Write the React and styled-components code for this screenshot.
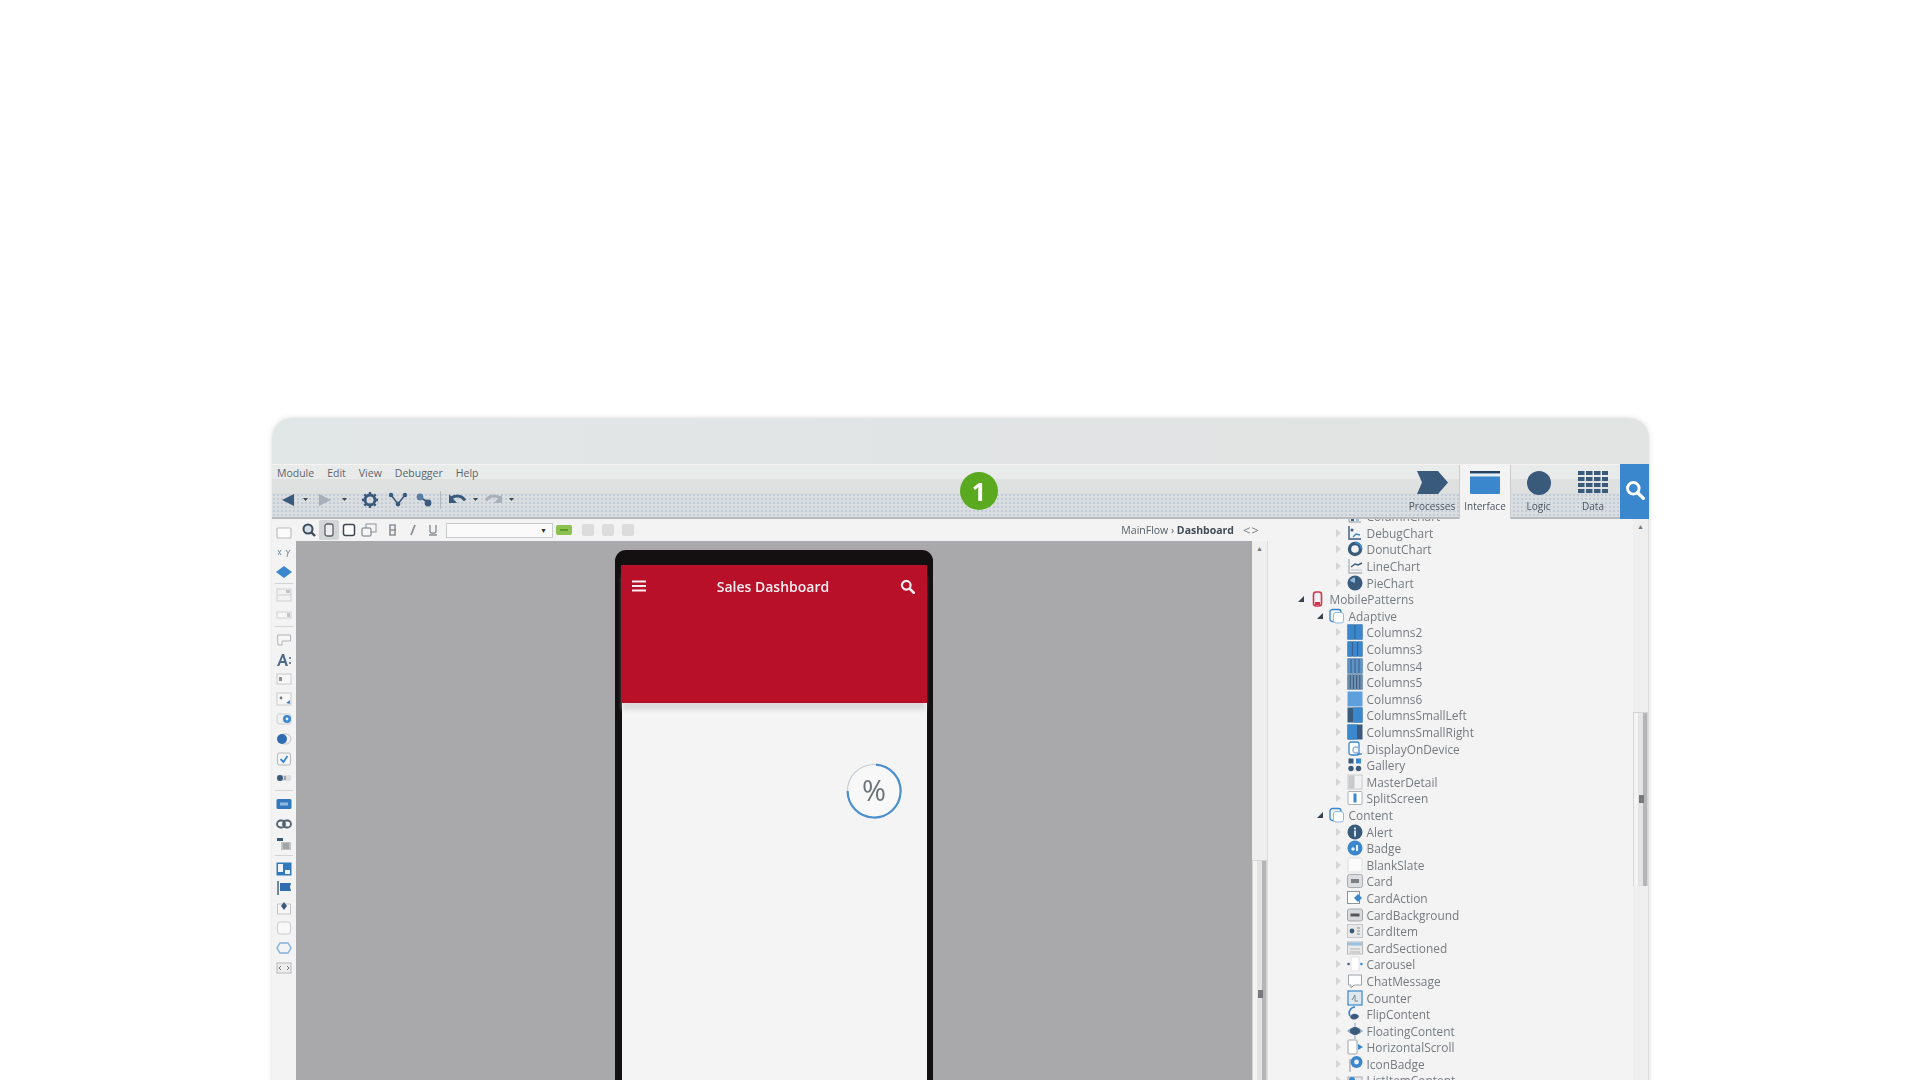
import styled, { createGlobalStyle } from "styled-components"

const Global = createGlobalStyle`
  html, body { margin: 0; background: #fff; }
  body { font-family: "Open Sans", "Liberation Sans", sans-serif; }
`
const NAVY = "#3a5a7c"
const BLUE = "#3b87cd"

const Page = styled.div`
  width: 1920px;
  height: 1080px;
  overflow: hidden;
  padding: 418px 0 0 272px;
  box-sizing: border-box;
`
const Window = styled.div`
  position: relative;
  width: 1377px;
  height: 680px;
  display: flex;
  flex-direction: column;
  border-radius: 20px 20px 0 0;
  overflow: hidden;
  background: #f4f3f3;
  box-shadow: 0 0 5px rgba(120, 110, 100, 0.25);
  filter: blur(0.7px);
`
const TitleBar = styled.div`
  height: 46px;
  flex: none;
  background: linear-gradient(90deg, #e1e6e6, #e2e3e3);
`
const Ribbon = styled.div`
  height: 55px;
  flex: none;
  display: flex;
  box-sizing: border-box;
  border-top: 1px solid #f8f3f3;
  background-color: #dbdee1;
  background-image:
    linear-gradient(#e9ebeb 0, #e9ebeb 14px, #dfe1e1 14px, #dfe1e1 28px, transparent 28px),
    radial-gradient(#c2ccd7 1.1px, transparent 1.4px);
  background-size: 100% 100%, 4px 4px;
`
const RibbonLeft = styled.div`
  flex: 1;
  display: flex;
  flex-direction: column;
  border-bottom: 2px solid #b9bcbe;
`
const Menu = styled.div`
  display: flex;
  gap: 13px;
  height: 16px;
  padding-left: 5px;
  align-items: center;
  font-size: 10.5px;
  color: #5d646a;
`
const Tools = styled.div`
  display: flex;
  align-items: center;
  height: 37px;
  padding: 2px 0 0 8.5px;
  box-sizing: border-box;
`
const ToolSlot = styled.span`
  display: flex;
  justify-content: center;
  width: ${(p) => p.$w}px;
`
const ToolSep = styled.span`
  width: 1px;
  height: 18px;
  margin: 0 7px 0 4px;
  background: #b5b9bd;
`
const Tab = styled.div`
  width: ${(p) => p.$w}px;
  display: flex;
  flex-direction: column;
  align-items: center;
  justify-content: space-between;
  padding: 6px 0 ${(p) => (p.$active ? 6 : 4)}px;
  box-sizing: border-box;
  font-size: 10px;
  color: #4a5560;
  background: ${(p) => (p.$active ? "#f4f3f3" : "transparent")};
  border-bottom: ${(p) => (p.$active ? "none" : "2px solid #b9bcbe")};
  border-left: ${(p) => (p.$active ? "1px solid #c9cbcc" : "none")};
  border-right: ${(p) => (p.$active ? "1px solid #c9cbcc" : "none")};
`
const SearchTab = styled.div`
  width: 29px;
  margin-top: -1px;
  padding-bottom: 3px;
  box-sizing: border-box;
  display: flex;
  align-items: center;
  justify-content: center;
  background: ${BLUE};
`
const Main = styled.div`
  flex: 1;
  display: flex;
  min-height: 0;
`
const Palette = styled.div`
  width: 24px;
  flex: none;
  display: flex;
  flex-direction: column;
  align-items: center;
  padding-top: 4px;
  box-sizing: border-box;
`
const PaletteItem = styled.span`
  height: 19.8px;
  display: flex;
  align-items: center;
  justify-content: center;
`
const PaletteSep = styled.span`
  width: 18px;
  height: 1px;
  margin: ${(p) => p.$m};
  background: #d3d4d5;
`
const Center = styled.div`
  width: 972px;
  flex: none;
  display: flex;
  flex-direction: column;
`
const SubBar = styled.div`
  height: 22px;
  flex: none;
  display: flex;
  align-items: center;
  padding-left: 3px;
  font-size: 10px;
  color: #55606a;
`
const SubBtn = styled.span`
  width: 20px;
  height: 20px;
  margin-left: ${(p) => p.$ml || 0}px;
  display: flex;
  align-items: center;
  justify-content: center;
  background: ${(p) => (p.$on ? "#d4d5d6" : "transparent")};
  border-radius: 2px;
`
const SubSpacer = styled.span`
  width: 4px;
  height: 18px;
  flex: none;
`
const Combo = styled.span`
  width: 100px;
  height: 13px;
  margin: 0 1px 0 3px;
  padding-right: 5px;
  display: flex;
  align-items: center;
  justify-content: flex-end;
  background: #fafafa;
  border: 1px solid #c9cacb;
  font-size: 7px;
  color: #333;
`
const Crumbs = styled.span`
  margin-left: auto;
  margin-right: 9px;
  font-size: 10.5px;
  white-space: nowrap;
  b { color: #3f4c58; font-weight: 700; }
`
const Chevrons = styled.span`
  width: 25px;
  color: #7c8186;
  font-size: 13px;
  letter-spacing: 1px;
`
const CanvasRow = styled.div`
  flex: 1;
  display: flex;
  min-height: 0;
`
const Canvas = styled.div`
  width: 956px;
  padding: 9px 0 0 319px;
  box-sizing: border-box;
  background: #a9a8ab;
  overflow: hidden;
`
const Phone = styled.div`
  width: 318px;
  height: 700px;
  box-sizing: border-box;
  padding: 15px 6px 0 7px;
  background: #141012;
  border-radius: 11px 11px 0 0;
`
const Screen = styled.div`
  height: 100%;
  background: #f5f4f4;
`
const PhoneHeader = styled.div`
  height: 138px;
  box-sizing: border-box;
  padding: 11px 12px 0 11px;
  margin-left: -1px;
  background: #b81029;
  box-shadow: 0 9px 4px -2px #dcdcdc;
`
const HeaderBar = styled.div`
  height: 20px;
  display: flex;
  justify-content: space-between;
  align-items: center;
  color: #fbeef0;
  font-size: 14px;
  font-weight: 600;
`
const PercentRow = styled.div`
  display: flex;
  justify-content: flex-end;
  padding: 60px 25px 0 0;
`
const VScroll = styled.div`
  width: 16px;
  flex: none;
  display: flex;
  flex-direction: column;
  background: #f0efef;
  border-right: 1px solid #dcdcdc;
  box-sizing: border-box;
`
const ScrollArrow = styled.span`
  height: 16px;
  flex: none;
  text-align: center;
  font-size: 7px;
  line-height: 16px;
  color: #777;
`
const ScrollGap = styled.span`
  height: ${(p) => p.$h}px;
  flex: none;
`
const Thumb = styled.span`
  position: relative;
  flex: ${(p) => (p.$h ? "none" : 1)};
  height: ${(p) => p.$h || 0}px;
  background: linear-gradient(90deg, #f4f4f4 0 30%, #e4e4e5 30% 70%, #b4b5b8 70%);
  border: 1px solid #d5d5d6;
  border-bottom: none;
  &::after {
    content: "";
    position: absolute;
    left: 5px;
    top: ${(p) => p.$grip}px;
    width: 5px;
    height: 8px;
    background: #77797c;
  }
`
const TreePanel = styled.div`
  flex: 1;
  overflow: hidden;
`
const TreeList = styled.div`
  margin-top: -11px;
`
const Row = styled.div`
  height: 16.6px;
  display: flex;
  align-items: center;
  padding-left: ${(p) => 29.5 + p.$level * 19}px;
  font-size: 11.9px;
  color: #767b80;
  white-space: nowrap;
`
const Arrow = styled.span`
  width: 0;
  height: 0;
  flex: none;
  margin-right: 6px;
  ${(p) =>
    p.$open
      ? `border-style: solid; border-width: 0 0 6px 6px; border-color: transparent transparent #36424e transparent;`
      : `border-style: solid; border-width: 4px 0 4px 5px; border-color: transparent transparent transparent #d3d5d7;`}
`
const RowIcon = styled.span`
  width: 16px;
  height: 16px;
  flex: none;
  margin-right: 4px;
  display: flex;
`
const Badge = styled.div`
  position: absolute;
  left: 688px;
  top: 54px;
  width: 38px;
  height: 38px;
  border-radius: 50%;
  background: #5aa91f;
  color: #fff;
  font-size: 25px;
  font-weight: 700;
  line-height: 38px;
  text-align: center;
`

const Svg = ({ w = 16, h = 16, vb = "0 0 16 16", children }) => (
  <svg width={w} height={h} viewBox={vb} style={{ display: "block" }}>
    {children}
  </svg>
)

const Dot = () => (
  <Svg w={5} h={5} vb="0 0 5 5"><path d="M0 1h5L2.5 4z" fill="#3c4650" /></Svg>
)

const columns = (n, fill) => {
  const bars = []
  const gap = 1
  const w = (15 - gap * (n - 1)) / n
  for (let i = 0; i < n; i++) {
    bars.push(<rect key={i} x={0.5 + i * (w + gap)} y="0.5" width={w} height="15" fill={fill} />)
  }
  return <><rect x="0.5" y="0.5" width="15" height="15" fill={NAVY} />{bars}</>
}

const treeIcons = {
  chart: <><path d="M2 1v13h12" fill="none" stroke="#8b98a5" /><rect x="4" y="9" width="3" height="4" fill={NAVY} /><rect x="9" y="6" width="3" height="7" fill="#9cc0e2" /></>,
  debug: <><path d="M2 1v13h12" fill="none" stroke={NAVY} strokeWidth="1.4" /><circle cx="5" cy="5" r="1.5" fill={NAVY} /><path d="M6 12l3-3 4 1" stroke={BLUE} fill="none" strokeWidth="1.4" /></>,
  donut: <><circle cx="8" cy="8" r="5.5" fill="none" stroke={NAVY} strokeWidth="3.4" /><path d="M8 1.5a6.5 6.5 0 0 1 6.5 6.5" fill="none" stroke={BLUE} strokeWidth="2" /></>,
  line: <><path d="M2 1v14h13" fill="none" stroke="#aeb3b8" strokeWidth="1.4" /><path d="M4 9l4-3 3 1 4-2" fill="none" stroke={NAVY} strokeWidth="1.4" /><path d="M4 12h11" stroke="#bcc6d0" /></>,
  pie: <><circle cx="8" cy="8" r="7.5" fill={NAVY} /><path d="M8 8V2.5A5.5 5.5 0 0 0 3 6z" fill="#8fb7df" /></>,
  mobile: <><rect x="3.5" y="1" width="8" height="14" rx="2.5" fill="none" stroke="#d0344f" strokeWidth="1.6" /><rect x="5" y="11" width="5" height="3" fill="#d0344f" /></>,
  folder: <><rect x="1" y="1.5" width="11" height="12" rx="2.5" fill="none" stroke={BLUE} strokeWidth="1.3" /><rect x="4.5" y="4.5" width="10" height="10.5" rx="2.5" fill="#fff" stroke="#8fb7df" /></>,
  col2: columns(2, BLUE),
  col3: columns(3, BLUE),
  col4: columns(4, "#5c93c8"),
  col5: columns(5, "#6d8fb0"),
  col6: <rect x="0.5" y="0.5" width="15" height="15" fill="#5f9fdb" />,
  small: <><rect x="0.5" y="0.5" width="15" height="15" fill={NAVY} /><rect x="6" y="0.5" width="9.5" height="15" fill={BLUE} /></>,
  smallR: <><rect x="0.5" y="0.5" width="15" height="15" fill={NAVY} /><rect x="0.5" y="0.5" width="9.5" height="15" fill={BLUE} /></>,
  display: <><rect x="2" y="1" width="10" height="13" rx="2" fill="#fff" stroke={BLUE} strokeWidth="1.3" /><circle cx="9" cy="9" r="3" fill="none" stroke="#8fb7df" strokeWidth="1.4" /><path d="M10 13h5" stroke={BLUE} strokeWidth="1.4" /></>,
  gallery: <><rect x="1.5" y="1.5" width="5" height="5" fill={NAVY} /><rect x="9" y="1.5" width="5" height="5" fill={BLUE} /><circle cx="4" cy="11.5" r="2.7" fill={NAVY} /><circle cx="11.5" cy="11.5" r="2.7" fill={NAVY} /></>,
  master: <><rect x="1" y="1" width="14" height="14" fill="#f2f2f2" stroke="#c8cacc" /><rect x="1.5" y="1.5" width="6" height="13" fill="#c8cacc" /></>,
  split: <><rect x="1" y="1.5" width="14" height="13" rx="1" fill="#fff" stroke="#a9b0b6" /><rect x="6.5" y="3.5" width="3" height="9" fill={BLUE} /></>,
  alert: <><circle cx="8" cy="8" r="7.5" fill={NAVY} /><rect x="7" y="3.5" width="2" height="2" fill="#cfe0f0" /><rect x="7" y="6.5" width="2" height="6" fill="#cfe0f0" /></>,
  badge: <><circle cx="8" cy="8" r="7.5" fill={BLUE} /><circle cx="6" cy="9" r="1.7" fill="#e9f2fa" /><rect x="9" y="5" width="2" height="6" fill="#e9f2fa" /></>,
  blank: <rect x="1" y="1" width="14" height="14" rx="1" fill="#fbfbfb" stroke="#dedfe0" />,
  card: <><rect x="0.5" y="1.5" width="15" height="13" rx="2" fill="#dcdde0" stroke="#a8abaf" /><rect x="4" y="6" width="8" height="4" fill="#7b8087" /></>,
  cardAction: <><rect x="0.5" y="1.5" width="12" height="12" fill="#fff" stroke="#8d959c" /><path d="M11 4l4 4-4 4-4-4z" fill={BLUE} /></>,
  cardBg: <><rect x="0.5" y="2" width="15" height="12" rx="2" fill="#d9dadc" stroke="#a2a5a9" /><rect x="3.5" y="6.5" width="9" height="3" fill="#55595e" /></>,
  cardItem: <><rect x="0.5" y="1.5" width="15" height="13" fill="#e8e8e9" stroke="#c5c7c9" /><circle cx="5" cy="8" r="2.4" fill={NAVY} /><path d="M10 5h3M10 8h3M10 11h3" stroke="#8a8f94" /></>,
  cardSec: <><rect x="0.5" y="2" width="15" height="12" fill="#e9e9ea" stroke="#b9bcbf" /><rect x="1" y="2.5" width="14" height="3" fill="#9dbfe0" /><path d="M3 9h10M3 12h10" stroke="#b0b3b6" /></>,
  carousel: <><rect x="4" y="1" width="8" height="14" fill="#fff" stroke="#e3e3e4" /><circle cx="1.6" cy="8" r="1.3" fill={NAVY} /><circle cx="14.4" cy="8" r="1.3" fill={BLUE} /></>,
  chat: <path d="M1.5 2h13v10H7l-3 3v-3H1.5z" fill="#fdfdfd" stroke="#9ea3a8" />,
  counter: <><rect x="1" y="1" width="14" height="14" fill="#dfe7ef" stroke={BLUE} strokeWidth="1.2" /><path d="M5 10l3-5v6h3" fill="none" stroke="#80868c" /></>,
  flip: <><path d="M8 1a6 6 0 0 0-5 9" fill="none" stroke={BLUE} strokeWidth="1.6" /><path d="M3 11c2-4 6-4 9-1-1 4-7 5-9 1z" fill={NAVY} /></>,
  floating: <><path d="M0 8l4-3v6zM16 8l-4-3v6z" fill="#8aa7c4" /><ellipse cx="8" cy="8" rx="5" ry="4" fill={NAVY} /><path d="M8 0v4M8 12v4" stroke="#a9bfd5" strokeWidth="1.5" /></>,
  scroll: <><rect x="1" y="1" width="9" height="14" rx="1" fill="#fff" stroke="#9ea3a8" /><path d="M11 5l5 3-5 3z" fill={BLUE} /></>,
  iconBadge: <><path d="M3 3v13" stroke="#a9adb1" strokeWidth="1.4" /><circle cx="9.5" cy="6" r="6" fill={BLUE} /><circle cx="9.5" cy="6" r="2.4" fill="#e9f2fa" /></>,
  list: <><rect x="1" y="5" width="14" height="11" fill="#e6e7e8" stroke="#a9adb1" /><circle cx="5" cy="8" r="3" fill={BLUE} /></>,
}

const tree = [
  [2, "ColumnChart", "chart"], [2, "DebugChart", "debug"], [2, "DonutChart", "donut"],
  [2, "LineChart", "line"], [2, "PieChart", "pie"],
  [0, "MobilePatterns", "mobile", true], [1, "Adaptive", "folder", true],
  [2, "Columns2", "col2"], [2, "Columns3", "col3"], [2, "Columns4", "col4"], [2, "Columns5", "col5"],
  [2, "Columns6", "col6"], [2, "ColumnsSmallLeft", "small"], [2, "ColumnsSmallRight", "smallR"],
  [2, "DisplayOnDevice", "display"], [2, "Gallery", "gallery"], [2, "MasterDetail", "master"],
  [2, "SplitScreen", "split"], [1, "Content", "folder", true],
  [2, "Alert", "alert"], [2, "Badge", "badge"], [2, "BlankSlate", "blank"], [2, "Card", "card"],
  [2, "CardAction", "cardAction"], [2, "CardBackground", "cardBg"], [2, "CardItem", "cardItem"],
  [2, "CardSectioned", "cardSec"], [2, "Carousel", "carousel"], [2, "ChatMessage", "chat"],
  [2, "Counter", "counter"], [2, "FlipContent", "flip"], [2, "FloatingContent", "floating"],
  [2, "HorizontalScroll", "scroll"], [2, "IconBadge", "iconBadge"], [2, "ListItemContent", "list"],
]

const box = (extra) => <Svg w={16} h={14} vb="0 0 16 14">{extra}</Svg>
const outline = <rect x="1" y="2" width="14" height="10" rx="1" fill="#fbfbfb" stroke="#b9bcbf" strokeWidth="1.2" />

// separators hold their own vertical margin, the list in the picture is not evenly spaced
const palette = [
  box(outline),
  <Svg w={16} h={10} vb="0 0 16 10"><path d="M2 2l3 5M5 2L2 7M10 2l2 3 2-3M12 5l-1 4" stroke="#7c8e9f" fill="none" /></Svg>,
  <Svg w={16} h={14} vb="0 0 16 14"><path d="M8 1l8 6-8 6-8-6z" fill={BLUE} /></Svg>,
  "1px 0 1px",
  box(<><rect x="1" y="1" width="14" height="12" fill="#f2f2f2" stroke="#cdcfd1" /><path d="M1 7h14" stroke="#cdcfd1" /><rect x="10" y="2" width="4" height="3" fill="#c0c3c6" /></>),
  box(<><rect x="1" y="4" width="14" height="6" fill="#f7f7f7" stroke="#cdcfd1" /><rect x="11" y="5" width="3" height="4" fill="#c0c3c6" /></>),
  "1px 0 3px",
  box(<path d="M1.5 2h13v6H6v4H2z" fill="#f7f7f7" stroke="#b0b3b6" />),
  <Svg vb="0 0 16 16"><path d="M1 14L6 2h2l4 12h-2.4l-1-3H4.5l-1.2 3zM5.2 9h2.8L6.8 5z" fill="#4e6d8d" /><path d="M14 5v2M14 10v2" stroke="#4e6d8d" strokeWidth="1.6" /></Svg>,
  box(<><rect x="1" y="2" width="14" height="10" fill="#f7f7f7" stroke="#c8cacc" /><rect x="3" y="5" width="3" height="4" fill="#8b8f94" /></>),
  box(<><rect x="1" y="1" width="14" height="12" fill="#f7f7f7" stroke="#c8cacc" /><circle cx="5" cy="6" r="1.4" fill="#70757a" /><path d="M10 11l4-3v4z" fill={BLUE} /></>),
  box(<><rect x="1" y="2" width="14" height="10" rx="2" fill="#f0f0f0" stroke="#cdcfd1" /><circle cx="11" cy="7" r="4" fill={BLUE} /><circle cx="11" cy="7" r="1.4" fill="#e8f1fa" /></>),
  box(<><rect x="3" y="2" width="12" height="10" rx="5" fill="#f3f3f3" stroke="#bfc2c5" /><circle cx="6" cy="7" r="5" fill="#2f6db0" /></>),
  box(<><rect x="1.5" y="1" width="13" height="12" rx="2" fill="#f6f6f6" stroke="#b5b8bb" /><path d="M4.5 7l3 3 4-6" fill="none" stroke={BLUE} strokeWidth="1.8" /></>),
  box(<><rect x="1" y="4" width="14" height="6" fill="#dcdddf" /><circle cx="4" cy="7" r="3" fill={NAVY} /><rect x="8" y="5" width="2" height="4" fill="#9ea3a8" /></>),
  "2px 0 3px",
  box(<><rect x="0.5" y="2" width="15" height="10" rx="1.5" fill="#3278bd" /><rect x="4" y="5.5" width="8" height="3" fill="#8fb8df" /></>),
  <Svg w={16} h={12} vb="0 0 16 12"><rect x="1" y="2.5" width="8" height="7" rx="3.5" fill="none" stroke="#4e5f70" strokeWidth="1.8" /><rect x="7" y="2.5" width="8" height="7" rx="3.5" fill="none" stroke="#4e5f70" strokeWidth="1.8" /></Svg>,
  box(<><rect x="1" y="1" width="6" height="3" fill={NAVY} /><rect x="5" y="5" width="10" height="8" fill="#bfc2c5" /><path d="M7 7h6M7 9h6M7 11h6" stroke="#808589" /></>),
  "1px 0 3px",
  box(<><rect x="0.5" y="0.5" width="15" height="13" fill="#3278bd" /><rect x="2" y="2" width="5" height="8" fill="#eef4fa" /><rect x="9" y="8" width="5" height="4" fill="#eef4fa" /></>),
  <Svg w={16} h={14} vb="0 0 16 14"><path d="M2 0v14" stroke="#4e6d8d" strokeWidth="1.6" /><path d="M4 2h11l-1 4 1 4H4z" fill="#2f6db0" /></Svg>,
  box(<><rect x="1.5" y="3" width="13" height="10" fill="#f7f7f7" stroke="#c3c5c7" /><path d="M8 1l3 4-3 4-3-4z" fill={NAVY} /></>),
  box(<rect x="1.5" y="1" width="13" height="12" rx="3" fill="#f9f9f9" stroke="#c8cacc" />),
  box(<path d="M4 2h8l3 5-3 5H4L1 7z" fill="none" stroke="#7fb0de" strokeWidth="1.4" />),
  box(<><rect x="1" y="2" width="14" height="10" fill="#ededee" stroke="#b5b8bb" /><path d="M5 5L3 7l2 2M11 5l2 2-2 2" fill="none" stroke="#70757a" /></>),
]

const SearchIcon = ({ size = 18, color = "#fff" }) => (
  <Svg w={size} h={size} vb="0 0 18 18">
    <circle cx="7.5" cy="7.5" r="5.2" fill="none" stroke={color} strokeWidth="2.6" />
    <path d="M11.5 11.5L16.5 16.5" stroke={color} strokeWidth="3" strokeLinecap="round" />
  </Svg>
)

const GreyBtn = ({ ml }) => (
  <SubBtn $ml={ml}><Svg w={12} h={12} vb="0 0 12 12"><rect width="12" height="12" rx="2" fill="#dcdcdc" /></Svg></SubBtn>
)

function App() {
  return (
    <Page>
      <Global />
      <Window>
        <TitleBar />
        <Ribbon>
          <RibbonLeft>
            <Menu>
              <span>Module</span><span>Edit</span><span>View</span><span>Debugger</span><span>Help</span>
            </Menu>
            <Tools>
              <ToolSlot $w={15}><Svg w={14} h={14} vb="0 0 14 14"><path d="M13 1v12L1 7z" fill={NAVY} /></Svg></ToolSlot>
              <ToolSlot $w={20}><Dot /></ToolSlot>
              <ToolSlot $w={18}><Svg w={14} h={14} vb="0 0 14 14"><path d="M1 1v12l12-6z" fill="#a9b0b7" /></Svg></ToolSlot>
              <ToolSlot $w={22}><Dot /></ToolSlot>
              <ToolSlot $w={28}>
                <Svg w={18} h={18} vb="0 0 18 18">
                  <circle cx="9" cy="9" r="5" fill="none" stroke={NAVY} strokeWidth="3" />
                  <path d="M9 1v3M9 14v3M1 9h3M14 9h3M3.3 3.3l2.2 2.2M12.5 12.5l2.2 2.2M3.3 14.7l2.2-2.2M12.5 5.5l2.2-2.2" stroke={NAVY} strokeWidth="2.4" />
                </Svg>
              </ToolSlot>
              <ToolSlot $w={28}>
                <Svg w={20} h={16} vb="0 0 20 16">
                  <path d="M3 3l7 9 7-9" fill="none" stroke={NAVY} strokeWidth="1.6" />
                  <circle cx="3" cy="3" r="2.2" fill={NAVY} /><circle cx="10" cy="12" r="2.4" fill={NAVY} /><circle cx="17" cy="3" r="2.2" fill={NAVY} />
                </Svg>
              </ToolSlot>
              <ToolSlot $w={24}>
                <Svg w={18} h={14} vb="0 0 18 14">
                  <path d="M5 4l9 6" stroke={NAVY} strokeWidth="2" />
                  <circle cx="5" cy="4" r="3.4" fill="#5a7ea3" /><circle cx="13" cy="10" r="3.4" fill={NAVY} />
                </Svg>
              </ToolSlot>
              <ToolSep />
              <ToolSlot $w={20}>
                <Svg w={20} h={14} vb="0 0 20 14">
                  <path d="M2 5.5c6-4 12-3 15 2" fill="none" stroke={NAVY} strokeWidth="2.8" /><path d="M1 1v9h8z" fill={NAVY} />
                </Svg>
              </ToolSlot>
              <ToolSlot $w={15}><Dot /></ToolSlot>
              <ToolSlot $w={20}>
                <Svg w={20} h={14} vb="0 0 20 14">
                  <path d="M18 5.5c-6-4-12-3-15 2" fill="none" stroke="#a9b0b7" strokeWidth="2.8" /><path d="M19 1v9h-8z" fill="#a9b0b7" />
                </Svg>
              </ToolSlot>
              <ToolSlot $w={18}><Dot /></ToolSlot>
            </Tools>
          </RibbonLeft>
          <Tab $w={54}>
            <Svg w={31} h={23} vb="0 0 31 23"><path d="M0 0h21l10 11.500-10 11.500H0l5-11.500z" fill={NAVY} /></Svg>
            <span>Processes</span>
          </Tab>
          <Tab $w={52} $active>
            <Svg w={30} h={23} vb="0 0 30 23"><rect width="30" height="23" rx="1" fill={BLUE} /><rect width="30" height="2.500" fill="#26415c" /><rect y="2.500" width="30" height="3" fill="#e6eef6" /></Svg>
            <span>Interface</span>
          </Tab>
          <Tab $w={55}>
            <Svg w={24} h={24} vb="0 0 24 24"><circle cx="12" cy="12" r="12" fill={NAVY} /></Svg>
            <span>Logic</span>
          </Tab>
          <Tab $w={54}>
            <Svg w={30} h={23} vb="0 0 30 23">
              {[0, 6, 12, 18].map((y) => [0, 8, 16, 24].map((x) => <rect key={`${x}-${y}`} x={x} y={y} width="6.500" height="4" fill={NAVY} />))}
            </Svg>
            <span>Data</span>
          </Tab>
          <SearchTab><SearchIcon size={20} /></SearchTab>
        </Ribbon>
        <Main>
          <Palette>
            {palette.map((p, i) =>
              typeof p === "string" ? <PaletteSep key={i} $m={p} /> : <PaletteItem key={i}>{p}</PaletteItem>
            )}
          </Palette>
          <Center>
            <SubBar>
              <SubBtn>
                <Svg w={16} h={16}><circle cx="7" cy="7" r="4.500" fill="#d5dfe8" stroke="#3c4c5c" strokeWidth="2" /><path d="M10 10l4 4" stroke="#3c4c5c" strokeWidth="2.400" /></Svg>
              </SubBtn>
              <SubBtn $on>
                <Svg w={12} h={14} vb="0 0 12 14"><rect x="2" y="1" width="8" height="12" rx="2" fill="#eee" stroke="#5a6065" strokeWidth="1.300" /></Svg>
              </SubBtn>
              <SubBtn>
                <Svg w={14} h={14} vb="0 0 14 14"><rect x="1.500" y="1.500" width="11" height="11" rx="2" fill="#fff" stroke="#3f4650" strokeWidth="1.500" /></Svg>
              </SubBtn>
              <SubBtn>
                <Svg w={16} h={14} vb="0 0 16 14"><rect x="5" y="1" width="10" height="8" fill="#f5f5f5" stroke="#8d9298" /><rect x="1" y="5" width="9" height="8" rx="1" fill="#f5f5f5" stroke="#6f757b" /></Svg>
              </SubBtn>
              <SubSpacer />
              <SubBtn><Svg w={10} h={12} vb="0 0 10 12"><path d="M2 1h5v10H2zM2 6h6" fill="none" stroke="#8a9097" strokeWidth="1.600" /></Svg></SubBtn>
              <SubBtn><Svg w={10} h={12} vb="0 0 10 12"><path d="M7 1L3 11" stroke="#8a9097" strokeWidth="1.800" /></Svg></SubBtn>
              <SubBtn><Svg w={10} h={12} vb="0 0 10 12"><path d="M2 1v6c0 3 6 3 6 0V1M1 11h8" fill="none" stroke="#8a9097" strokeWidth="1.400" /></Svg></SubBtn>
              <Combo>▼</Combo>
              <SubBtn><Svg w={16} h={10} vb="0 0 16 10"><rect width="16" height="10" rx="2" fill="#8cc152" /><path d="M4 5h8" stroke="#5a9a28" strokeWidth="2" /></Svg></SubBtn>
              <GreyBtn ml={4} />
              <GreyBtn />
              <GreyBtn />
              <Crumbs>MainFlow › <b>Dashboard</b></Crumbs>
              <Chevrons>{"<>"}</Chevrons>
            </SubBar>
            <CanvasRow>
              <Canvas>
                <Phone>
                  <Screen>
                    <PhoneHeader>
                      <HeaderBar>
                        <Svg w={14} h={14} vb="0 0 14 14"><path d="M0 2.500h14M0 7h14M0 11.500h14" stroke="#fbeef0" strokeWidth="2.200" /></Svg>
                        <span>Sales Dashboard</span>
                        <SearchIcon size={15} color="#fbeef0" />
                      </HeaderBar>
                    </PhoneHeader>
                    <PercentRow>
                      <Svg w={56} h={56} vb="0 0 56 56">
                        <circle cx="28" cy="28" r="26.500" fill="#f8f8f8" stroke="#c5ced6" strokeWidth="1.200" />
                        <path d="M30 1.600A26.500 26.500 0 1 1 1.600 28" fill="none" stroke="#4a90cf" strokeWidth="2.200" />
                        <text x="28" y="38" textAnchor="middle" fontSize="29" fontFamily="Open Sans" fill="#6c7479">%</text>
                      </Svg>
                    </PercentRow>
                  </Screen>
                </Phone>
              </Canvas>
              <VScroll>
                <ScrollArrow>▲</ScrollArrow>
                <ScrollGap $h={303} />
                <Thumb $grip={129} />
              </VScroll>
            </CanvasRow>
          </Center>
          <TreePanel>
            <TreeList>
              {tree.map(([level, label, icon, open]) => (
                <Row key={label} $level={level}>
                  <Arrow $open={open} />
                  <RowIcon><Svg>{treeIcons[icon]}</Svg></RowIcon>
                  {label}
                </Row>
              ))}
            </TreeList>
          </TreePanel>
          <VScroll>
            <ScrollArrow>▲</ScrollArrow>
            <ScrollGap $h={177} />
            <Thumb $h={173} $grip={82} />
          </VScroll>
        </Main>
        <Badge>1</Badge>
      </Window>
    </Page>
  )
}

export default App
